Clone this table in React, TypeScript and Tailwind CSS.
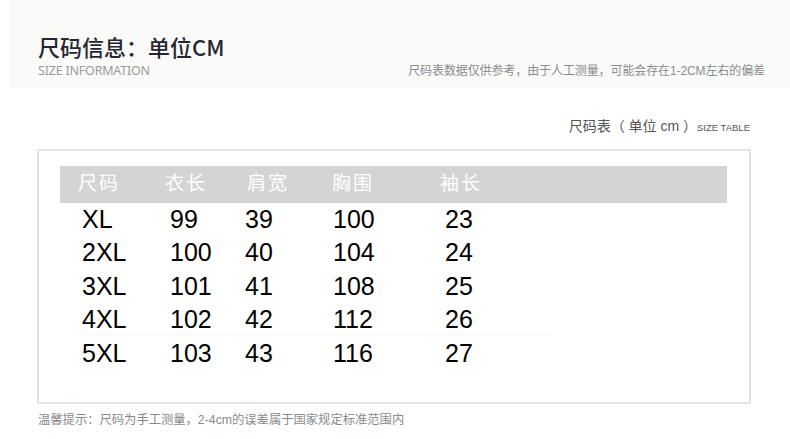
import React from "react";

const rows = [
  ["XL", "99", "39", "100", "23"],
  ["2XL", "100", "40", "104", "24"],
  ["3XL", "101", "41", "108", "25"],
  ["4XL", "102", "42", "112", "26"],
  ["5XL", "103", "43", "116", "27"],
];

const headers = ["尺码", "衣长", "肩宽", "胸围", "袖长"];

export default function App() {
  return (
    <div
      className="w-[790px] h-[439px] bg-white overflow-hidden"
      style={{ fontFamily: '"Liberation Sans", "Noto Sans CJK SC", sans-serif' }}
    >
      {/* header band */}
      <div className="ml-[10px] h-[88px] bg-[#fafaf9] flex justify-between items-end pb-[9px]">
        <div className="pl-[28px]">
          <h1
            className="text-[22px] leading-[26px] font-medium text-[#262631]"
            style={{ fontFamily: '"Noto Sans CJK SC", sans-serif' }}
          >
            尺码信息：单位CM
          </h1>
          <p
            className="mt-[4px] text-[12.5px] leading-[16px] text-[#9b9b9b] tracking-[-0.2px]"
            style={{ fontFamily: '"Noto Sans", sans-serif' }}
          >
            SIZE INFORMATION
          </p>
        </div>
        <p className="pr-[25px] text-[12px] leading-[16px] text-[#8c8c8c] tracking-[-0.1px]">
          尺码表数据仅供参考，由于人工测量，可能会存在1-2CM左右的偏差
        </p>
      </div>

      {/* size table caption */}
      <div className="mt-[29px] flex justify-end pr-[40px] items-baseline text-[#555]">
        <span className="text-[14px] leading-[18px]">尺码表（ 单位 cm ）</span>
        <span className="text-[9.5px] leading-[18px]">SIZE TABLE</span>
      </div>

      {/* table box */}
      <div className="mt-[12px] ml-[37px] w-[714px] h-[255px] border-2 border-[#e4e4e4] pt-[15px] pl-[21px]">
        <div className="grid grid-cols-[87px_82px_85px_108px_1fr] w-[667px] h-[37px] bg-[#d4d4d4] items-center pl-[18px] text-white text-[19px]">
          {headers.map((h) => (
            <span key={h} className="tracking-[2px]">
              {h}
            </span>
          ))}
        </div>
        <div className="pl-[22px] -mt-[2px]">
          {rows.map((r, i) => (
            <div
              key={i}
              className={`grid grid-cols-[88px_75px_88px_112px_1fr] h-[33.4px] items-center text-[25px] text-black ${
                i === 3 ? "border-b border-[#f6f6f6] w-[470px]" : ""
              }`}
            >
              {r.map((c, j) => (
                <span key={j}>{c}</span>
              ))}
            </div>
          ))}
        </div>
      </div>

      {/* note */}
      <p className="mt-[8px] ml-[38px] text-[12.3px] leading-[16px] text-[#8a8a8a]">
        温馨提示：尺码为手工测量，2-4cm的误差属于国家规定标准范围内
      </p>
    </div>
  );
}
